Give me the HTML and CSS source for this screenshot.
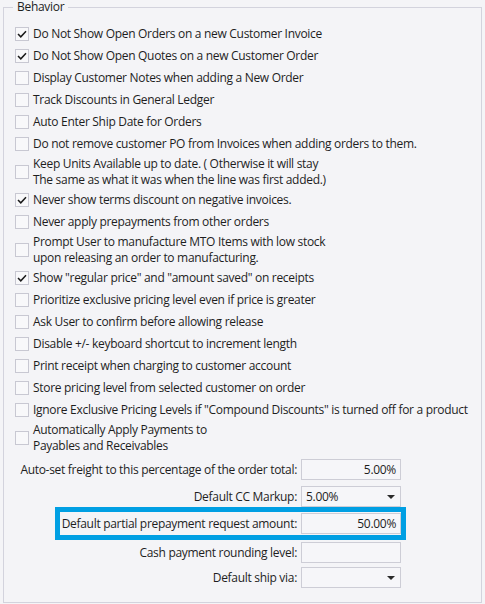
FILE: index.html
```html
<!DOCTYPE html>
<html>
<head>
<meta charset="utf-8">
<link rel="stylesheet" href="styles.css">
</head>
<body>
<fieldset class="group">
  <legend class="group-title">Behavior</legend>
  <ul class="options">
    <li class="opt"><span class="cb on"><svg viewBox="0 0 14 14"><polyline points="3,7 5.8,9.8 11,4.2"/></svg></span><span class="opt-text">Do Not Show Open Orders on a new Customer Invoice</span></li>
    <li class="opt"><span class="cb on"><svg viewBox="0 0 14 14"><polyline points="3,7 5.8,9.8 11,4.2"/></svg></span><span class="opt-text">Do Not Show Open Quotes on a new Customer Order</span></li>
    <li class="opt"><span class="cb"></span><span class="opt-text">Display Customer Notes when adding a New Order</span></li>
    <li class="opt"><span class="cb"></span><span class="opt-text">Track Discounts in General Ledger</span></li>
    <li class="opt"><span class="cb"></span><span class="opt-text">Auto Enter Ship Date for Orders</span></li>
    <li class="opt"><span class="cb"></span><span class="opt-text">Do not remove customer PO from Invoices when adding orders to them.</span></li>
    <li class="opt two"><span class="cb"></span><span class="opt-text">Keep Units Available up to date. ( Otherwise it will stay<br>The same as what it was when the line was first added.)</span></li>
    <li class="opt"><span class="cb on"><svg viewBox="0 0 14 14"><polyline points="3,7 5.8,9.8 11,4.2"/></svg></span><span class="opt-text">Never show terms discount on negative invoices.</span></li>
    <li class="opt"><span class="cb"></span><span class="opt-text">Never apply prepayments from other orders</span></li>
    <li class="opt two"><span class="cb"></span><span class="opt-text">Prompt User to manufacture MTO Items with low stock<br>upon releasing an order to manufacturing.</span></li>
    <li class="opt"><span class="cb on"><svg viewBox="0 0 14 14"><polyline points="3,7 5.8,9.8 11,4.2"/></svg></span><span class="opt-text">Show "regular price" and "amount saved" on receipts</span></li>
    <li class="opt"><span class="cb"></span><span class="opt-text">Prioritize exclusive pricing level even if price is greater</span></li>
    <li class="opt"><span class="cb"></span><span class="opt-text">Ask User to confirm before allowing release</span></li>
    <li class="opt"><span class="cb"></span><span class="opt-text">Disable +/- keyboard shortcut to increment length</span></li>
    <li class="opt"><span class="cb"></span><span class="opt-text">Print receipt when charging to customer account</span></li>
    <li class="opt"><span class="cb"></span><span class="opt-text">Store pricing level from selected customer on order</span></li>
    <li class="opt"><span class="cb"></span><span class="opt-text">Ignore Exclusive Pricing Levels if "Compound Discounts" is turned off for a product</span></li>
    <li class="opt two"><span class="cb"></span><span class="opt-text">Automatically Apply Payments to<br>Payables and Receivables</span></li>
  </ul>
  <div class="form">
    <div class="row r1"><span class="label">Auto-set freight to this percentage of the order total:</span><span class="field num">5.00%</span></div>
    <div class="row r2"><span class="label">Default CC Markup:</span><span class="field combo"><span class="combo-val">5.00%</span><span class="arrow"></span></span></div>
    <div class="row r3 highlight"><span class="label">Default partial prepayment request amount:</span><span class="field num">50.00%</span></div>
    <div class="row r4"><span class="label">Cash payment rounding level:</span><span class="field num"></span></div>
    <div class="row r5"><span class="label">Default ship via:</span><span class="field combo"><span class="combo-val"></span><span class="arrow"></span></span></div>
  </div>
</fieldset>
</body>
</html>
```
FILE: styles.css
```css
html, body {
  margin: 0;
  padding: 0;
  background: #f4f4f7;
}
body {
  font-family: "Open Sans", "Noto Sans", sans-serif;
  font-size: 12px;
  color: #1e1e1e;
  width: 485px;
  height: 604px;
  overflow: hidden;
}
.group {
  margin: 0 0 0 3px;
  padding: 0;
  width: 477px;
  height: 601px;
  border: 1px solid #d3d3dd;
  box-sizing: content-box;
}
.group-title {
  margin-left: 9px;
  padding: 0 4px;
  line-height: 14px;
  letter-spacing: -0.3px;
}
.options {
  list-style: none;
  margin: 0;
  padding: 9px 0 0 11px;
}
.opt {
  display: flex;
  align-items: center;
  gap: 4px;
  height: 22px;
  line-height: 16px;
  letter-spacing: -0.3px;
}
.opt.two {
  height: 34px;
}
.cb {
  flex: none;
  width: 12px;
  height: 12px;
  border: 1px solid #c8c8d2;
  background: #f8f8fa;
  display: flex;
}
.cb svg {
  width: 14px;
  height: 14px;
  margin: -1px;
  fill: none;
  stroke: #1a1a1a;
  stroke-width: 1.5;
}
.form {
  display: flex;
  flex-direction: column;
  align-items: flex-end;
  padding-right: 80px;
  margin-top: 4px;
  letter-spacing: -0.3px;
}
.row {
  display: flex;
  align-items: center;
  gap: 4px;
}
.r2 { margin-top: 6px; }
.r3 { margin-top: 0; }
.r4 { margin-top: 2px; }
.r5 { margin-top: 4px; }
.highlight {
  border: 5px solid #009fe3;
  padding: 1px 0 1px 2px;
  margin-right: -5px;
}
.field {
  box-sizing: border-box;
  width: 100px;
  height: 21px;
  border: 1px solid #cdcdd6;
  background: #f6f6f9;
  line-height: 19px;
  display: flex;
  align-items: center;
}
.num {
  justify-content: flex-end;
  padding-right: 4px;
}
.combo {
  justify-content: space-between;
  padding: 0 5px 0 4px;
}
.arrow {
  width: 0;
  height: 0;
  border-left: 4px solid transparent;
  border-right: 4px solid transparent;
  border-top: 4px solid #2a2a2a;
  margin-top: 1px;
}
```
